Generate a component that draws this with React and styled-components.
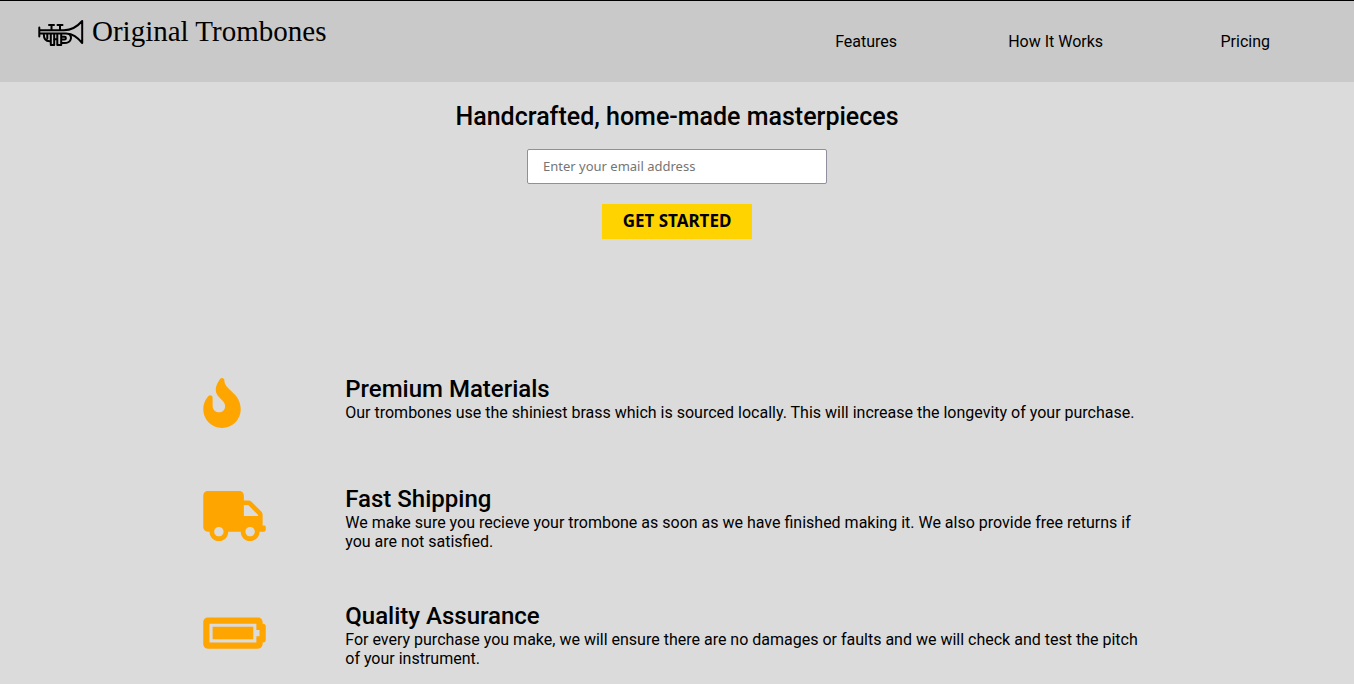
import React from "react";
import styled, { createGlobalStyle } from "styled-components";
import { FaFire, FaTruck, FaBatteryFull } from "react-icons/fa";

const GlobalStyle = createGlobalStyle`
  * { box-sizing: border-box; margin: 0; padding: 0; }
  body { background: #dbdbdb; color: #000; font: 16px/19px Roboto, "Liberation Sans", sans-serif; }
`;

const Header = styled.header`
  display: flex;
  justify-content: space-between;
  height: 82px;
  padding: 0 14px 0 38px;
  border-top: 1px solid #000;
  background: #c9c9c9;
`;

const Brand = styled.a`
  display: flex;
  align-items: flex-start;
  gap: 8px;
  padding-top: 14px;
  color: #000;
  text-decoration: none;
  font: 29px/32px "Liberation Serif", serif;
  white-space: nowrap;
`;

const Trumpet = styled.svg`
  flex: none;
  width: 46px;
  height: 34px;
  fill: none;
  stroke: #000;
  stroke-linecap: round;
  stroke-linejoin: round;
`;

const Nav = styled.nav`
  display: grid;
  grid-template-columns: repeat(3, 1fr);
  align-items: center;
  width: 42vw;
  text-align: center;
`;

const NavLink = styled.a`
  color: #000;
  text-decoration: none;
`;

const Hero = styled.section`
  display: grid;
  justify-items: center;
  gap: 18px;
  padding-top: 21px;
`;

const SignupForm = styled.form`
  display: grid;
  justify-items: center;
  gap: 20px;
`;

const Heading = styled.h2`
  font-size: ${(p) => (p.$large ? 25 : 24)}px;
  line-height: 28px;
  font-weight: 500;
`;

const EmailInput = styled.input`
  width: 300px;
  height: 35px;
  padding: 0 15px 2px;
  border: 1px solid #8f8f9d;
  border-radius: 2px;
  background: #fff;
  font: 13px "Noto Sans", sans-serif;
  &::placeholder { color: #757575; opacity: 1; }
`;

const SubmitButton = styled.button`
  width: 150px;
  height: 35px;
  padding-bottom: 2px;
  border: 0;
  background: #ffd300;
  color: #000;
  font: 700 17px "Noto Sans", sans-serif;
  cursor: pointer;
`;

const FeatureList = styled.section`
  display: grid;
  gap: 51px;
  width: 70%;
  margin: 0 auto;
  padding-top: 136px;
`;

const Feature = styled.article`
  display: grid;
  grid-template-columns: 15% 1fr;
  min-height: 59px;
`;

const FeatureIcon = styled.div`
  align-self: center;
  padding-bottom: 4px;
  color: #ffa500;
  svg {
    display: block;
    width: ${(p) => (p.$narrow ? 38 : 63)}px;
    height: 50px;
  }
`;

const FeatureText = styled.div`
  padding-right: 10px;
`;

const features = [
  { Icon: FaFire, narrow: true, title: "Premium Materials", text: "Our trombones use the shiniest brass which is sourced locally. This will increase the longevity of your purchase." },
  { Icon: FaTruck, title: "Fast Shipping", text: "We make sure you recieve your trombone as soon as we have finished making it. We also provide free returns if you are not satisfied." },
  { Icon: FaBatteryFull, title: "Quality Assurance", text: "For every purchase you make, we will ensure there are no damages or faults and we will check and test the pitch of your instrument." },
];

const Logo = () => (
  <Trumpet viewBox="38 14 46 34" aria-hidden="true">
    <path strokeWidth="2" d="M39.300 26.500v9M39.500 29.200H64C72 29.200 77 26 82.200 20V42C77 36 73 32.800 66 32.400H40" />
    <path strokeWidth="2" d="M49 24h5M57.500 24h5M51.500 24v5M60 24v5" />
    <path strokeWidth="2" d="M43.800 33C43.800 38 46 40.200 49.500 40.200M47.300 33v4.500M50.800 33v11h3.400V33M57.300 33v11h3.900V33M54 38.300h3M61.500 35.800h3a1.300 1.300 0 0 1 0 2.800h-3M61.500 42h3C70.500 42 73 36.500 69 33" />
  </Trumpet>
);

export default function App() {
  return (
    <>
      <GlobalStyle />
      <Header>
        <Brand href="#"><Logo />Original Trombones</Brand>
        <Nav>
          <NavLink href="#features">Features</NavLink>
          <NavLink href="#how">How It Works</NavLink>
          <NavLink href="#pricing">Pricing</NavLink>
        </Nav>
      </Header>
      <main>
        <Hero>
          <Heading $large>Handcrafted, home-made masterpieces</Heading>
          <SignupForm>
            <EmailInput type="email" aria-label="Email address" placeholder="Enter your email address" />
            <SubmitButton type="submit">GET STARTED</SubmitButton>
          </SignupForm>
        </Hero>
        <FeatureList id="features">
          {features.map(({ Icon, narrow, title, text }) => (
            <Feature key={title}>
              <FeatureIcon $narrow={narrow}><Icon aria-hidden="true" /></FeatureIcon>
              <FeatureText>
                <Heading>{title}</Heading>
                <p>{text}</p>
              </FeatureText>
            </Feature>
          ))}
        </FeatureList>
      </main>
    </>
  );
}
